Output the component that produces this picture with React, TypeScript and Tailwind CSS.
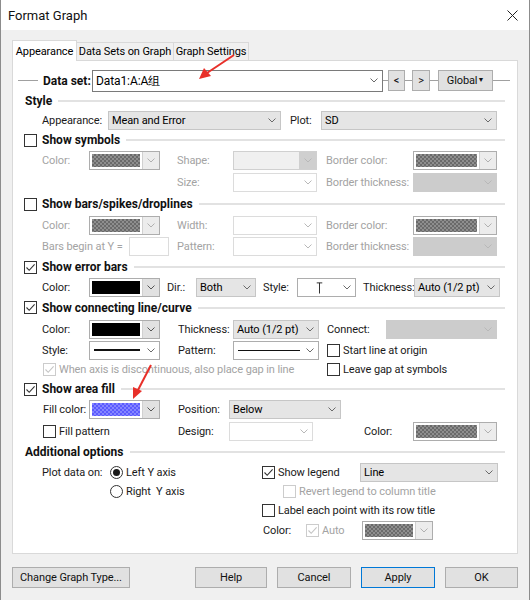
import React from "react";

// Windows-like "Format Graph" dialog

const GRAY_CHECKER =
  "bg-[image:repeating-conic-gradient(#6a6a6a_0%_25%,#8e8e8e_0%_50%)] bg-[length:4px_4px]";
const BLUE_CHECKER =
  "bg-[image:repeating-conic-gradient(#5a5aff_0%_25%,#8585ff_0%_50%)] bg-[length:4px_4px]";

const Chevron = ({ color = "#6a6a6a" }: { color?: string }) => (
  <svg width="8" height="5" viewBox="0 0 8 5">
    <path d="M0.5 0.5 L4 4 L7.5 0.5" fill="none" stroke={color} strokeWidth="1" />
  </svg>
);

type Variant = "main" | "white" | "gray" | "dis" | "disWhite" | "disDark";

const comboStyle: Record<Variant, string> = {
  main: "bg-white border-[#7a7a7a]",
  white: "bg-white border-[#adadad]",
  gray: "bg-[#e5e5e5] border-[#c6c6c6]",
  dis: "bg-[#f0f0f0] border-[#d0d0d0]",
  disWhite: "bg-white border-[#dcdcdc]",
  disDark: "bg-[#cccccc] border-[#cccccc]",
};

function Combo({
  className = "",
  variant = "gray",
  children,
}: {
  className?: string;
  variant?: Variant;
  children?: React.ReactNode;
}) {
  const dim = variant === "dis" || variant === "disWhite" || variant === "disDark";
  return (
    <div className={`flex h-[19px] shrink-0 items-center border ${comboStyle[variant]} ${className}`}>
      <div className="flex min-w-0 flex-1 items-center overflow-hidden whitespace-nowrap pl-[3px]">{children}</div>
      <div
        className={`flex h-full w-[17px] items-center justify-center ${
          variant === "dis" ? "bg-[#cfcfcf]" : ""
        }`}
      >
        <Chevron color={dim ? "#b8b8b8" : "#6a6a6a"} />
      </div>
    </div>
  );
}

function Swatch({
  className = "w-[71px]",
  fill,
  disabled,
}: {
  className?: string;
  fill: string;
  disabled?: boolean;
}) {
  return (
    <div className={`flex h-[19px] shrink-0 border border-[#adadad] bg-white ${className}`}>
      <div className={`m-[2px] flex-1 ${fill}`} />
      <div
        className={`flex w-[17px] items-center justify-center border-l border-[#d0d0d0] ${
          disabled ? "bg-[#ececec]" : "bg-[#e1e1e1]"
        }`}
      >
        <Chevron color={disabled ? "#b0b0b0" : "#555555"} />
      </div>
    </div>
  );
}

function Check({ checked, disabled }: { checked?: boolean; disabled?: boolean }) {
  return (
    <span
      className={`inline-flex h-[13px] w-[13px] shrink-0 items-center justify-center border bg-white ${
        disabled ? "border-[#cccccc]" : "border-[#333333]"
      }`}
    >
      {checked && (
        <svg width="11" height="11" viewBox="0 0 11 11">
          <path
            d="M1.5 5.5 L4.2 8.3 L9.6 2.4"
            fill="none"
            stroke={disabled ? "#c4c4c4" : "#333333"}
            strokeWidth="1.1"
          />
        </svg>
      )}
    </span>
  );
}

function Radio({ on }: { on?: boolean }) {
  return (
    <span className="inline-flex h-[13px] w-[13px] shrink-0 items-center justify-center rounded-full border border-[#333333] bg-white">
      {on && <span className="h-[7px] w-[7px] rounded-full bg-[#1a1a1a]" />}
    </span>
  );
}

const Lbl = ({
  className = "",
  dim,
  children,
}: {
  className?: string;
  dim?: boolean;
  children: React.ReactNode;
}) => (
  <span className={`shrink-0 whitespace-nowrap ${dim ? "text-[#a3a3a3]" : "text-[#1a1a1a]"} ${className}`}>
    {children}
  </span>
);

function Header({ label, checked, box = true }: { label: string; checked?: boolean; box?: boolean }) {
  return (
    <div className={`flex h-full items-center pr-[12px] ${box ? "pl-[11px]" : "pl-[12px]"}`}>
      {box && <Check checked={checked} />}
      <span className={`text-[12px] font-bold tracking-normal text-[#111] ${box ? "ml-[5px]" : ""}`}>{label}</span>
      <div className="ml-[6px] h-[2px] flex-1 bg-[#e2e2e2]" />
    </div>
  );
}

const Row = ({ h, className = "", children }: { h: string; className?: string; children: React.ReactNode }) => (
  <div className={`flex items-center ${h} ${className}`}>{children}</div>
);

const Btn = ({ className = "", children }: { className?: string; children: React.ReactNode }) => (
  <div
    className={`flex h-[21px] shrink-0 items-center justify-center whitespace-nowrap border bg-[#e1e1e1] text-[#111] ${
      className || "border-[#adadad]"
    }`}
  >
    {children}
  </div>
);

export default function App() {
  return (
    <div className="relative h-[600px] w-[530px] overflow-hidden border-x border-[#8c8c8c] bg-[#f0f0f0] font-['Roboto',sans-serif] text-[11px] leading-none tracking-[-0.1px]">
      {/* title bar */}
      <div className="flex h-[30px] items-center justify-between bg-white pl-[7px] pr-[11px]">
        <span className="text-[13px] tracking-normal text-[#111]">Format Graph</span>
        <svg width="11" height="11" viewBox="0 0 11 11">
          <path d="M0.5 0.5 L10.5 10.5 M10.5 0.5 L0.5 10.5" stroke="#222" strokeWidth="1" />
        </svg>
      </div>

      {/* tabs */}
      <div className="ml-[11px] mt-[10px] flex h-[20px] items-end whitespace-nowrap">
        <div className="relative z-10 -mb-px flex h-[21px] w-[65px] items-center justify-center border border-b-0 border-[#d9d9d9] bg-white">
          Appearance
        </div>
        <div className="flex h-[18px] w-[97px] items-center justify-center border border-l-0 border-b-0 border-[#d9d9d9] bg-[#f0f0f0]">
          Data Sets on Graph
        </div>
        <div className="flex h-[18px] w-[75px] items-center justify-center border border-l-0 border-b-0 border-[#d9d9d9] bg-[#f0f0f0]">
          Graph Settings
        </div>
      </div>

      {/* tab panel */}
      <div className="ml-[11px] flex h-[494px] w-[506px] flex-col border border-[#d9d9d9] bg-white pt-[9px]">
        {/* Data set */}
        <Row h="h-[21px]" className="pl-[5px] pr-[7px]">
          <div className="h-px w-[20px] bg-[#a0a0a0]" />
          <span className="ml-[5px] w-[49px] shrink-0 text-[12px] font-bold tracking-normal text-[#111]">Data set:</span>
          <Combo variant="main" className="h-[22px] w-[291px]">
            <span className="text-[12px]">Data1:A:A组</span>
          </Combo>
          <div className="h-px w-[5px] bg-[#a0a0a0]" />
          <Btn className="w-[17px] border-[#adadad]">&lt;</Btn>
          <div className="h-px w-[7px] bg-[#a0a0a0]" />
          <Btn className="w-[18px] border-[#adadad]">&gt;</Btn>
          <div className="h-px w-[8px] bg-[#a0a0a0]" />
          <Btn className="w-[55px] justify-between border-[#adadad] px-[3px]">
            <span>Global</span>
            <span className="text-[7px]">▼</span>
          </Btn>
          <div className="h-px flex-1 bg-[#a0a0a0]" />
        </Row>

        {/* Style */}
        <div className="h-[19px]">
          <Header label="Style" box={false} />
        </div>
        <Row h="h-[20px]" className="pl-[29px]">
          <Lbl className="w-[66px]">Appearance:</Lbl>
          <Combo className="w-[173px]">Mean and Error</Combo>
          <Lbl className="ml-[9px] w-[31px]">Plot:</Lbl>
          <Combo className="w-[176px]">SD</Combo>
        </Row>

        {/* Show symbols */}
        <div className="h-[20px]">
          <Header label="Show symbols" />
        </div>
        <Row h="h-[21px]" className="pl-[29px]">
          <Lbl dim className="w-[47px]">Color:</Lbl>
          <Swatch fill={GRAY_CHECKER} disabled />
          <Lbl dim className="ml-[17px] w-[56px]">Shape:</Lbl>
          <Combo variant="dis" className="w-[84px]" />
          <Lbl dim className="ml-[9px] w-[87px]">Border color:</Lbl>
          <Swatch className="w-[84px]" fill={GRAY_CHECKER} disabled />
        </Row>
        <Row h="h-[22px]" className="pl-[164px]">
          <Lbl dim className="w-[56px]">Size:</Lbl>
          <Combo variant="disWhite" className="w-[84px]" />
          <Lbl dim className="ml-[9px] w-[87px]">Border thickness:</Lbl>
          <Combo variant="disDark" className="w-[84px]" />
        </Row>

        {/* Show bars */}
        <div className="h-[22px]">
          <Header label="Show bars/spikes/droplines" />
        </div>
        <Row h="h-[21px]" className="pl-[29px]">
          <Lbl dim className="w-[47px]">Color:</Lbl>
          <Swatch fill={GRAY_CHECKER} disabled />
          <Lbl dim className="ml-[17px] w-[56px]">Width:</Lbl>
          <Combo variant="disWhite" className="w-[84px]" />
          <Lbl dim className="ml-[9px] w-[87px]">Border color:</Lbl>
          <Swatch className="w-[84px]" fill={GRAY_CHECKER} disabled />
        </Row>
        <Row h="h-[21px]" className="pl-[29px]">
          <Lbl dim className="w-[87px]">Bars begin at Y =</Lbl>
          <div className="h-[19px] w-[40px] shrink-0 border border-[#dcdcdc] bg-white" />
          <Lbl dim className="ml-[8px] w-[56px]">Pattern:</Lbl>
          <Combo variant="disWhite" className="w-[84px]" />
          <Lbl dim className="ml-[9px] w-[87px]">Border thickness:</Lbl>
          <Combo variant="disDark" className="w-[84px]" />
        </Row>

        {/* Show error bars */}
        <div className="h-[20px]">
          <Header label="Show error bars" checked />
        </div>
        <Row h="h-[20px]" className="pl-[29px]">
          <Lbl className="w-[47px]">Color:</Lbl>
          <Swatch fill="bg-black" />
          <Lbl className="ml-[7px] w-[29px]">Dir.:</Lbl>
          <Combo className="w-[60px]">Both</Combo>
          <Lbl className="ml-[7px] w-[34px]">Style:</Lbl>
          <Combo variant="white" className="w-[59px]">
            <svg width="40" height="15" viewBox="0 0 40 15">
              <path d="M17 2.5 H23 M20 2.5 V14" stroke="#222" strokeWidth="1" fill="none" />
            </svg>
          </Combo>
          <Lbl className="ml-[7px] w-[51px]">Thickness:</Lbl>
          <Combo className="w-[86px]">Auto (1/2 pt)</Combo>
        </Row>

        {/* Show connecting line */}
        <div className="h-[21px]">
          <Header label="Show connecting line/curve" checked />
        </div>
        <Row h="h-[22px]" className="pl-[29px]">
          <Lbl className="w-[47px]">Color:</Lbl>
          <Swatch fill="bg-black" />
          <Lbl className="ml-[18px] w-[55px]">Thickness:</Lbl>
          <Combo className="w-[86px]">Auto (1/2 pt)</Combo>
          <Lbl className="ml-[8px] w-[59px]">Connect:</Lbl>
          <Combo variant="disDark" className="w-[111px]" />
        </Row>
        <Row h="h-[20px]" className="pl-[29px]">
          <Lbl className="w-[47px]">Style:</Lbl>
          <Combo variant="white" className="w-[71px]">
            <div className="ml-[1px] h-[2px] w-[46px] bg-[#111]" />
          </Combo>
          <Lbl className="ml-[18px] w-[55px]">Pattern:</Lbl>
          <Combo variant="white" className="w-[86px]">
            <div className="ml-[1px] h-px w-[62px] bg-[#111]" />
          </Combo>
          <span className="ml-[8px] flex items-center">
            <Check />
            <Lbl className="ml-[3px]">Start line at origin</Lbl>
          </span>
        </Row>
        <Row h="h-[19px]" className="pl-[30px]">
          <span className="flex w-[284px] shrink-0 items-center">
            <Check checked disabled />
            <Lbl dim className="ml-[3px]">When axis is discontinuous, also place gap in line</Lbl>
          </span>
          <Check />
          <Lbl className="ml-[3px]">Leave gap at symbols</Lbl>
        </Row>

        {/* Show area fill */}
        <div className="h-[20px]">
          <Header label="Show area fill" checked />
        </div>
        <Row h="h-[21px]" className="pl-[30px]">
          <Lbl className="w-[46px]">Fill color:</Lbl>
          <Swatch fill={BLUE_CHECKER} />
          <Lbl className="ml-[18px] w-[51px]">Position:</Lbl>
          <Combo className="w-[112px]">Below</Combo>
        </Row>
        <Row h="h-[22px]" className="pl-[30px]">
          <span className="flex w-[135px] shrink-0 items-center">
            <Check />
            <Lbl className="ml-[3px]">Fill pattern</Lbl>
          </span>
          <Lbl className="w-[51px]">Design:</Lbl>
          <Combo variant="disWhite" className="w-[84px]" />
          <Lbl className="ml-[51px] w-[49px]">Color:</Lbl>
          <Swatch className="w-[84px]" fill={GRAY_CHECKER} disabled />
        </Row>

        {/* Additional options */}
        <div className="h-[20px]">
          <Header label="Additional options" box={false} />
        </div>
        <Row h="h-[20px]" className="pl-[29px]">
          <Lbl className="w-[68px]">Plot data on:</Lbl>
          <span className="flex w-[152px] shrink-0 items-center">
            <Radio on />
            <Lbl className="ml-[3px]">Left Y axis</Lbl>
          </span>
          <span className="flex w-[98px] shrink-0 items-center">
            <Check checked />
            <Lbl className="ml-[3px]">Show legend</Lbl>
          </span>
          <Combo className="w-[138px]">Line</Combo>
        </Row>
        <Row h="h-[18px]" className="pl-[97px]">
          <span className="flex w-[173px] shrink-0 items-center">
            <Radio />
            <Lbl className="ml-[3px]">Right&nbsp;&nbsp;Y axis</Lbl>
          </span>
          <Check disabled />
          <Lbl dim className="ml-[3px]">Revert legend to column title</Lbl>
        </Row>
        <Row h="h-[20px]" className="pl-[249px]">
          <Check />
          <Lbl className="ml-[3px]">Label each point with its row title</Lbl>
        </Row>
        <Row h="h-[21px]" className="pl-[250px]">
          <Lbl className="w-[43px]">Color:</Lbl>
          <span className="flex w-[56px] shrink-0 items-center">
            <Check checked disabled />
            <Lbl dim className="ml-[3px]">Auto</Lbl>
          </span>
          <Swatch fill={GRAY_CHECKER} disabled />
        </Row>
      </div>

      {/* bottom buttons */}
      <div className="mt-[13px] flex pl-[11px]">
        <Btn className="w-[118px] border-[#adadad]">Change Graph Type...</Btn>
        <div className="ml-[65px] flex gap-[10px]">
          <Btn className="w-[72px] border-[#adadad]">Help</Btn>
          <Btn className="w-[74px] border-[#adadad]">Cancel</Btn>
          <Btn className="w-[74px] border-[#0078d7]">Apply</Btn>
          <Btn className="w-[73px] border-[#adadad]">OK</Btn>
        </div>
      </div>

      {/* red annotation arrows */}
      <svg className="pointer-events-none absolute left-0 top-0" width="530" height="600">
        <path d="M233 55 L206 73" stroke="#e8302a" strokeWidth="2" fill="none" />
        <path d="M198 79 L203 68 L210 76 Z" fill="#e8302a" />
        <path d="M150 365 L137 390" stroke="#e8302a" strokeWidth="2" fill="none" />
        <path d="M132 399 L132 387 L141 391 Z" fill="#e8302a" />
      </svg>
    </div>
  );
}
